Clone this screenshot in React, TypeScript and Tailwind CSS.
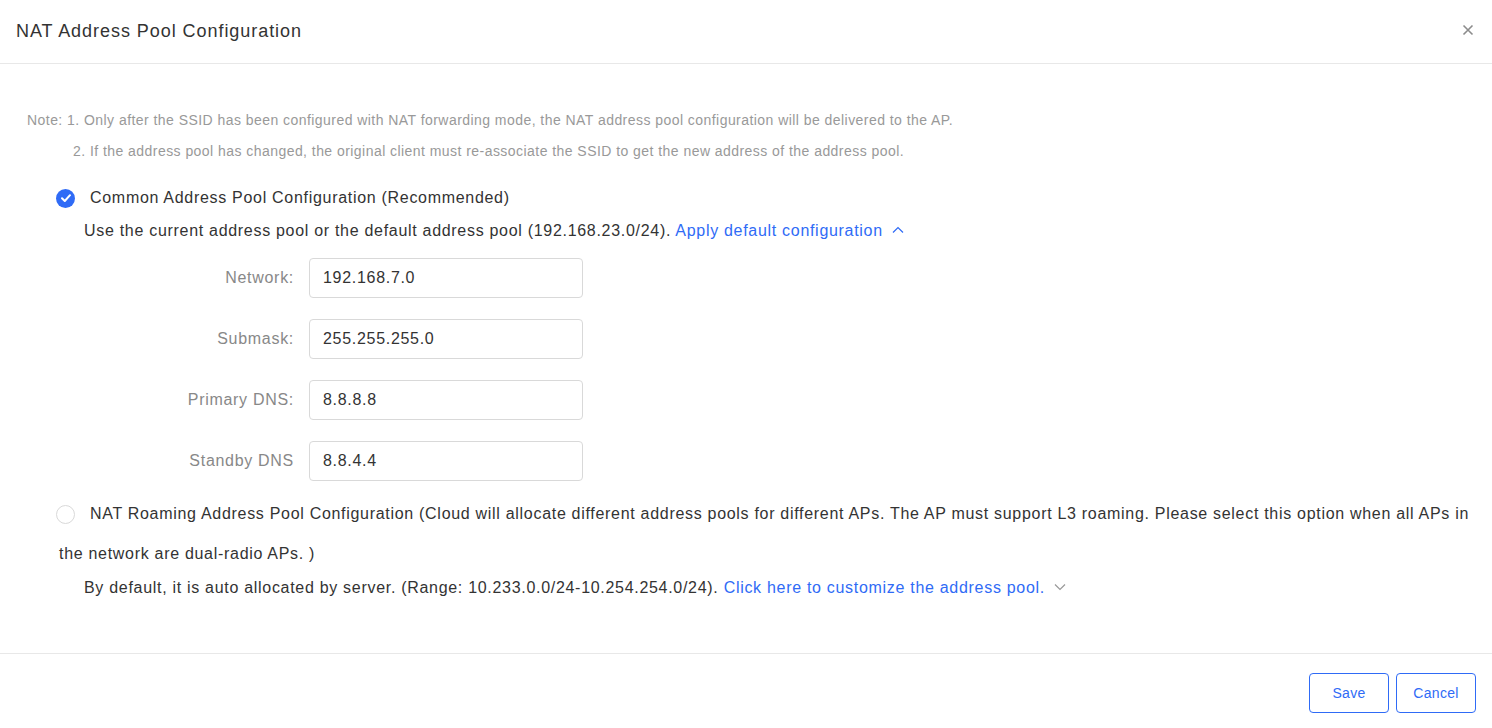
import { useState } from 'react'

type FieldProps = {
  label: string
  value: string
}

const Field = ({ label, value }: FieldProps) => {
  return (
    <div className="flex h-[40px] items-center">
      <div className="w-[210px] text-right text-[16px] tracking-[0.7px] text-[#888]">{label}</div>
      <input
        className="ml-[15px] h-[40px] w-[274px] rounded-[4px] border border-[#d9d9d9] px-[13px] font-['Liberation_Sans',Arial,sans-serif] text-[16px] tracking-[0.7px] text-[#333] outline-none"
        defaultValue={value}
      />
    </div>
  )
}

const Check = ({ checked }: { checked: boolean }) => {
  if (checked) {
    return (
      <span className="inline-flex h-[19px] w-[19px] items-center justify-center rounded-full bg-[#2f6bf6] align-middle">
        <svg width="12" height="12" viewBox="0 0 12 12" fill="none">
          <path d="M2 6.2 L4.8 9 L10 3.2" stroke="white" strokeWidth="2" strokeLinecap="round" strokeLinejoin="round" />
        </svg>
      </span>
    )
  }
  return (
    <span className="inline-block h-[19px] w-[19px] rounded-full border border-[#d9d9d9] bg-white align-middle" />
  )
}

export default function App() {
  const [mode, setMode] = useState<'common' | 'roaming'>('common')

  return (
    <div className="h-[728px] w-[1492px] bg-white font-['Liberation_Sans',Arial,sans-serif] text-[#333]">
      <div className="flex h-[64px] items-center justify-between border-b border-[#e8e8e8] pl-[16px] pr-[18px]">
        <h1 className="text-[18px] tracking-[0.95px] text-[#333]">NAT Address Pool Configuration</h1>
        <svg width="12" height="12" viewBox="0 0 12 12" className="mb-[4px]">
          <path d="M1.5 1.5 L10.5 10.5 M10.5 1.5 L1.5 10.5" stroke="#8c8c8c" strokeWidth="1.6" />
        </svg>
      </div>

      <div className="h-[589px] pt-[41px]">
        <div className="pl-[27px] text-[14px] leading-[31px] tracking-[0.45px] text-[#999]">
          <div>Note: 1. Only after the SSID has been configured with NAT forwarding mode, the NAT address pool configuration will be delivered to the AP.</div>
          <div className="pl-[46px]">2. If the address pool has changed, the original client must re-associate the SSID to get the new address of the address pool.</div>
        </div>

        <div className="mt-[11px] pl-[56px] tracking-[0.7px]">
          <label className="flex h-[40px] cursor-pointer items-center gap-[15px] text-[16px]" onClick={() => setMode('common')}>
            <Check checked={mode === 'common'} />
            <span>Common Address Pool Configuration (Recommended)</span>
          </label>
          <div className="pl-[28px] text-[16px] leading-[26px]">
            Use the current address pool or the default address pool (192.168.23.0/24).{' '}
            <span className="cursor-pointer text-[#2f6bf6]">Apply default configuration</span>
            <svg width="14" height="10" viewBox="0 0 14 10" className="ml-[8px] inline-block align-[1px]">
              <path d="M2 7.5 L7 2.5 L12 7.5" stroke="#2f6bf6" strokeWidth="1.2" fill="none" />
            </svg>
          </div>
        </div>

        <div className="mt-[14px] flex flex-col gap-[21px] pl-[84px]">
          <Field label="Network:" value="192.168.7.0" />
          <Field label="Submask:" value="255.255.255.0" />
          <Field label="Primary DNS:" value="8.8.8.8" />
          <Field label="Standby DNS" value="8.8.4.4" />
        </div>

        <div className="mt-[13px] pl-[59px] pr-[20px] tracking-[0.7px]">
          <div className="cursor-pointer text-[16px] leading-[40px]" onClick={() => setMode('roaming')}>
            <span className="-ml-[3px] mr-[15px] inline-block align-middle leading-none">
              <Check checked={mode === 'roaming'} />
            </span>
            NAT Roaming Address Pool Configuration (Cloud will allocate different address pools for different APs. The AP must support L3 roaming. Please select this option when all APs in the network are dual-radio APs. )
          </div>
          <div className="pl-[25px] text-[16px] leading-[28px]">
            By default, it is auto allocated by server. (Range: 10.233.0.0/24-10.254.254.0/24).{' '}
            <span className="cursor-pointer text-[#2f6bf6]">Click here to customize the address pool.</span>
            <svg width="14" height="10" viewBox="0 0 14 10" className="ml-[8px] inline-block align-[1px]">
              <path d="M2 2.5 L7 7.5 L12 2.5" stroke="#999" strokeWidth="1.2" fill="none" />
            </svg>
          </div>
        </div>
      </div>

      <div className="flex justify-end gap-[7px] border-t border-[#e8e8e8] pr-[16px] pt-[19px]">
        <button className="h-[40px] w-[80px] rounded-[4px] border border-[#2f6bf6] bg-white text-[14px] tracking-[0.3px] text-[#2f6bf6]">Save</button>
        <button className="h-[40px] w-[80px] rounded-[4px] border border-[#2f6bf6] bg-white text-[14px] tracking-[0.3px] text-[#2f6bf6]">Cancel</button>
      </div>
    </div>
  )
}
